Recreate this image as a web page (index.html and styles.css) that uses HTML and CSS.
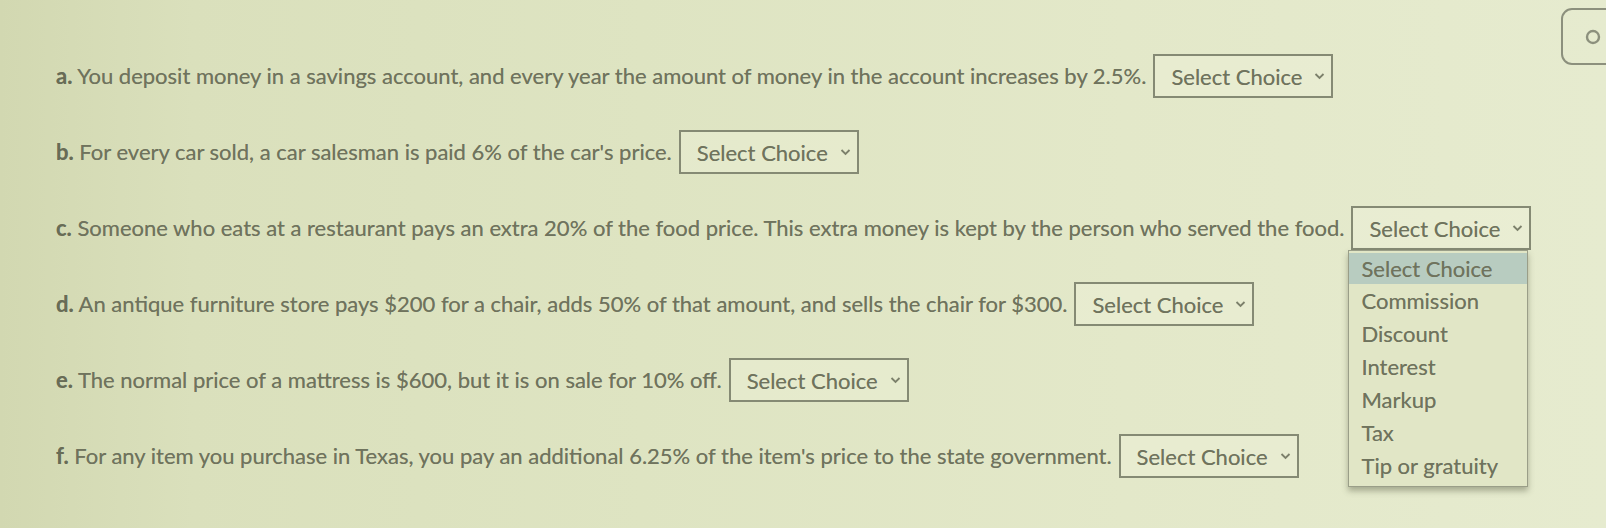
FILE: index.html
```html
<!DOCTYPE html>
<html lang="en">
<head>
<meta charset="utf-8">
<title>Percent applications</title>
<link rel="stylesheet" href="styles.css">
</head>
<body>
<div class="page">
  <div class="search-btn">
    <svg width="20" height="20" viewBox="0 0 20 20"><circle cx="12" cy="10" r="6" fill="none" stroke="#8c907d" stroke-width="2.4"/></svg>
  </div>
  <div class="questions">
    <div class="row">
      <p class="q"><b>a.</b> You deposit money in a savings account, and every year the amount of money in the account increases by 2.5%.</p>
      <div class="select"><span>Select Choice</span><svg class="chev" width="11" height="8" viewBox="0 0 11 8"><path d="M1.5 2l4 4 4-4" fill="none" stroke="currentColor" stroke-width="1.8"/></svg></div>
    </div>
    <div class="row">
      <p class="q"><b>b.</b> For every car sold, a car salesman is paid 6% of the car's price.</p>
      <div class="select"><span>Select Choice</span><svg class="chev" width="11" height="8" viewBox="0 0 11 8"><path d="M1.5 2l4 4 4-4" fill="none" stroke="currentColor" stroke-width="1.8"/></svg></div>
    </div>
    <div class="row">
      <p class="q"><b>c.</b> Someone who eats at a restaurant pays an extra 20% of the food price. This extra money is kept by the person who served the food.</p>
      <div class="select-wrap">
        <div class="select open"><span>Select Choice</span><svg class="chev" width="11" height="8" viewBox="0 0 11 8"><path d="M1.5 2l4 4 4-4" fill="none" stroke="currentColor" stroke-width="1.8"/></svg></div>
        <ul class="menu">
          <li class="active">Select Choice</li>
          <li>Commission</li>
          <li>Discount</li>
          <li>Interest</li>
          <li>Markup</li>
          <li>Tax</li>
          <li>Tip or gratuity</li>
        </ul>
      </div>
    </div>
    <div class="row">
      <p class="q"><b>d.</b> An antique furniture store pays $200 for a chair, adds 50% of that amount, and sells the chair for $300.</p>
      <div class="select"><span>Select Choice</span><svg class="chev" width="11" height="8" viewBox="0 0 11 8"><path d="M1.5 2l4 4 4-4" fill="none" stroke="currentColor" stroke-width="1.8"/></svg></div>
    </div>
    <div class="row">
      <p class="q"><b>e.</b> The normal price of a mattress is $600, but it is on sale for 10% off.</p>
      <div class="select"><span>Select Choice</span><svg class="chev" width="11" height="8" viewBox="0 0 11 8"><path d="M1.5 2l4 4 4-4" fill="none" stroke="currentColor" stroke-width="1.8"/></svg></div>
    </div>
    <div class="row">
      <p class="q"><b>f.</b> For any item you purchase in Texas, you pay an additional 6.25% of the item's price to the state government.</p>
      <div class="select"><span>Select Choice</span><svg class="chev" width="11" height="8" viewBox="0 0 11 8"><path d="M1.5 2l4 4 4-4" fill="none" stroke="currentColor" stroke-width="1.8"/></svg></div>
    </div>
  </div>
</div>
</body>
</html>
```

FILE: styles.css
```css
* { box-sizing: border-box; }
html, body {
  margin: 0;
  padding: 0;
}
body {
  width: 1606px;
  height: 528px;
  overflow: hidden;
  background: linear-gradient(90deg, #d2d8b1 0%, #dae0bc 12%, #dee4c2 40%, #e3e8c9 70%, #e6ebcf 100%);
  font-family: Lato, "Noto Sans", sans-serif;
  color: #6f735d;
}
.page {
  position: relative;
  height: 528px;
  padding: 54px 0 0 56px;
}
.search-btn {
  position: absolute;
  left: 1561px;
  top: 8px;
  width: 60px;
  height: 57px;
  border: 2px solid #8c907d;
  border-radius: 11px;
  display: flex;
  align-items: center;
  padding-left: 18px;
}
.questions {
  display: flex;
  flex-direction: column;
  gap: 32px;
}
.row {
  display: flex;
  align-items: center;
  height: 44px;
}
.q {
  margin: 0;
  font-size: 22px;
  line-height: 26px;
  white-space: nowrap;
  text-shadow: 0 0 0.5px rgba(100, 105, 85, 0.6);
}
.q b {
  font-weight: 700;
  color: #686c56;
}
.select {
  margin-left: 7px;
  width: 180px;
  height: 44px;
  border: 2px solid #858a74;
  display: flex;
  align-items: center;
  justify-content: space-between;
  padding: 0 6px 0 16px;
  font-size: 22px;
  color: #6f735d;
  background: rgba(240, 244, 220, 0.35);
  text-shadow: 0 0 0.5px rgba(100, 105, 85, 0.6);
}
.chev { color: #7c806b; }
.select-wrap {
  position: relative;
}
.menu {
  position: absolute;
  left: 4px;
  top: 44px;
  width: 180px;
  margin: 0;
  padding: 2px 0 4px;
  list-style: none;
  background: #e1e6c6;
  border: 1.5px solid #9a9e88;
  box-shadow: 0 4px 6px rgba(90, 95, 70, 0.45);
  z-index: 2;
}
.menu li {
  height: 33px;
  line-height: 33px;
  padding-left: 12px;
  font-size: 22px;
  color: #6f735d;
  text-shadow: 0 0 0.5px rgba(100, 105, 85, 0.6);
}
.menu li.active {
  background: #b8ccc0;
  height: 31px;
  line-height: 31px;
}
```
